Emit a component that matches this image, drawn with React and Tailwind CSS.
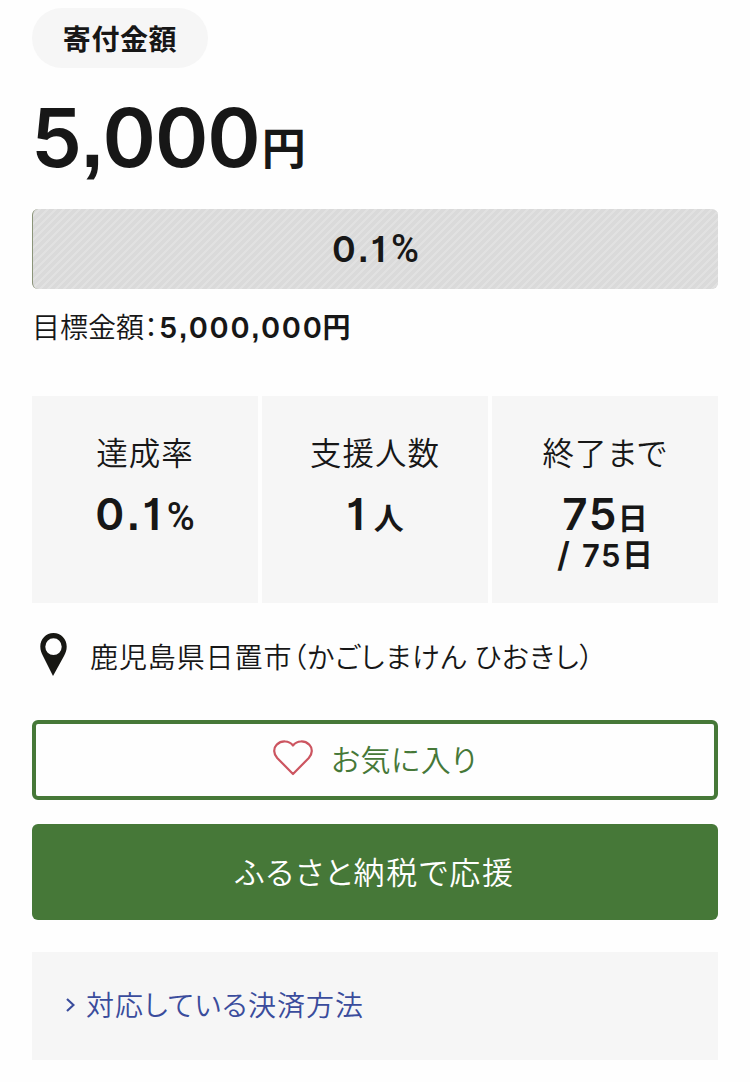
import React from 'react';

const stats = [
  { label: '達成率', value: '0.1', unit: '%' },
  { label: '支援人数', value: '1', unit: '人' },
  { label: '終了まで', value: '75', unit: '日', total: '75' },
];

// digits in Inter, commas and dots in Liberation Sans for their square shape
const Num = ({ children, className = '' }) => (
  <span className={`font-['Inter',sans-serif] font-semibold [font-feature-settings:'cv01'] ${className}`}>
    {children.split(/([.,])/).map((part, i) =>
      part === '.' || part === ',' ? (
        <span key={i} className="font-['Liberation_Sans',sans-serif] font-bold">{part}</span>
      ) : (
        part
      )
    )}
  </span>
);

const Percent = ({ className = '' }) => (
  <span className={`font-['Roboto',sans-serif] font-medium ${className}`}>%</span>
);

const PinIcon = () => (
  <svg className="h-[43px] w-[27px] shrink-0" viewBox="0 0 27 42" preserveAspectRatio="none" fill="#171713">
    <path
      fillRule="evenodd"
      d="M13.500 0C6 0 .3 5.800.3 13.300C.3 17 1.500 19.500 3 22.500L13 42L24 22.500C25.600 19.500 26.700 17 26.700 13.300C26.700 5.800 21 0 13.500 0ZM13.500 5.200A8.200 8.200 0 1 1 13.500 21.600A8.200 8.200 0 1 1 13.500 5.200Z"
    />
  </svg>
);

const HeartIcon = () => (
  <svg className="mb-[4px] h-[36px] w-[40px] shrink-0" viewBox="0 0 40 36" fill="none" stroke="#cc5560" strokeWidth="2.2">
    <path
      strokeLinejoin="round"
      d="M20 34L4.200 18C.4 13.800.2 8.300 3.800 4.600C8.300.2 16 .4 20 5.500C24 .4 31.700.2 36.200 4.600C39.800 8.300 39.600 13.800 35.800 18Z"
    />
  </svg>
);

const StatCard = ({ label, value, unit, total }) => (
  <div className="bg-[#f6f6f6] pt-[35px] text-center">
    <p className="h-[40px] text-[31.5px] leading-[40px] font-[350] tracking-[1px] [font-feature-settings:'palt']">{label}</p>
    <p className="mt-[16px] h-[48px] text-[44px] leading-[48px]">
      <Num className={unit === '%' ? 'tracking-[3px]' : 'tracking-[1.5px]'}>{value}</Num>
      {unit === '%' ? (
        <Percent className="ml-[3px] text-[38px] leading-none" />
      ) : (
        <span className={`text-[30px] leading-none font-bold align-[1px] ${unit === '人' ? 'ml-[8px]' : ''}`}>{unit}</span>
      )}
    </p>
    {total && (
      <p className="h-[40px] text-[31px] leading-[38px]">
        <Num className="mr-[12px] text-[34px] leading-none">/</Num>
        <Num className="text-[31px] leading-none tracking-[1.5px]">{total}</Num>
        <span className="text-[31px] leading-none font-bold align-[1px]">日</span>
      </p>
    )}
  </div>
);

const App = () => {
  return (
    <main className="flex h-[1082px] flex-col overflow-hidden bg-[#fefefe] px-8 pt-2 font-['Noto_Sans_CJK_JP',sans-serif] whitespace-nowrap text-[#171717]">
      <div className="flex h-[60px] w-44 items-center justify-center rounded-full bg-[#f6f6f6]">
        <span className="text-[28px] leading-[40px] font-bold tracking-[0.6px]">寄付金額</span>
      </div>

      <p className="mt-[15px] h-[98px] text-[81px] leading-[98px]">
        <Num className="-ml-px tracking-[-1px]">5,000</Num>
        <span className="ml-[2px] text-[44px] leading-none font-bold align-[2px]">円</span>
      </p>

      <div className="mt-[28px] flex h-[80px] items-center justify-center rounded-md border-l border-[#8b9479] bg-[#dadada] bg-[repeating-linear-gradient(135deg,transparent_0px,transparent_4px,#e1e1e1_4px,#e1e1e1_5.657px)]">
        <p className="mb-[3px] text-[36px] leading-[48px]">
          <Num className="tracking-[2.5px]">0.1</Num>
          <Percent className="ml-[3px] text-[38px] leading-none" />
        </p>
      </div>

      <p className="mt-[17px] h-[40px] text-[28px] leading-[40px]">
        <span className="font-[350] [font-feature-settings:'palt']">目標金額：</span>
        <Num className="ml-[1px] text-[29px] leading-none tracking-[1.7px]">5,000,000</Num>
        <span className="-ml-px leading-none font-bold">円</span>
      </p>

      <div className="mt-[50px] grid h-[207px] grid-cols-3 gap-1">
        {stats.map((stat) => (
          <StatCard key={stat.label} {...stat} />
        ))}
      </div>

      <div className="mt-[30px] flex h-[42px] items-center pl-2">
        <PinIcon />
        <span className="mt-[3px] ml-[23px] text-[28px] leading-[40px] font-[350] tracking-[0.9px] [font-feature-settings:'palt']">
          鹿児島県日置市（かごしまけん ひおきし）
        </span>
      </div>

      <button className="mt-[45px] flex h-20 items-center justify-center rounded-md border-4 border-[#467838] text-[#467838]">
        <HeartIcon />
        <span className="mb-[5px] ml-[18px] text-[30px] leading-[40px] font-[350] tracking-[0.6px] [font-feature-settings:'palt']">お気に入り</span>
      </button>

      <button className="mt-6 flex h-24 items-center justify-center rounded-md bg-[#467838] text-white">
        <span className="mb-[3px] text-[31px] leading-[40px] font-[350] tracking-[1.7px] [font-feature-settings:'palt']">ふるさと納税で応援</span>
      </button>

      <div className="mt-8 flex h-[108px] items-center bg-[#f6f6f6] pl-[34px] text-[#3a4c9c]">
        <svg className="mb-[2px] h-[14px] w-[9px]" viewBox="0 0 9 14" fill="none" stroke="currentColor" strokeWidth="2.2">
          <path d="M1 1L7.500 7L1 13" />
        </svg>
        <a className="mb-[4px] ml-[11px] text-[28px] leading-[40px] font-[350] tracking-[1px] [font-feature-settings:'palt']">対応している決済方法</a>
      </div>
    </main>
  );
};

export default App;
